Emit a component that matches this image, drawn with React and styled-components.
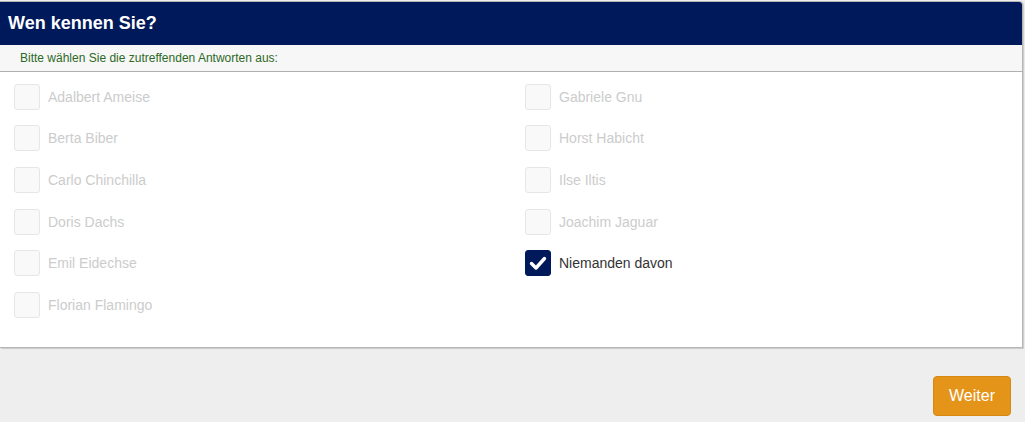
import React, { useState } from "react";
import styled, { createGlobalStyle } from "styled-components";

const GlobalStyle = createGlobalStyle`
  html, body {
    margin: 0;
    padding: 0;
    background: #eeeeee;
    font-family: "Liberation Sans", Arial, sans-serif;
  }
`;

const Panel = styled.div`
  margin: 1px 2px 0 0;
  background: #ffffff;
  border: 1px solid #b5b5b5;
  border-left: none;
  border-radius: 0 4px 0 0;
  box-shadow: 1px 1px 1px rgba(0, 0, 0, 0.15);
  overflow: hidden;
`;

const Header = styled.div`
  height: 43px;
  background: #00195a;
  color: #ffffff;
  font-size: 18px;
  font-weight: bold;
  display: flex;
  align-items: center;
  padding-left: 8px;
`;

const Hint = styled.div`
  height: 26px;
  background: #f7f7f7;
  border-bottom: 1px solid #b0b0b0;
  color: #2d6a26;
  font-size: 12px;
  display: flex;
  align-items: center;
  padding-left: 20px;
`;

const Options = styled.div`
  display: grid;
  grid-template-columns: 511px 1fr;
  grid-auto-flow: column;
  grid-template-rows: repeat(6, 41.6px);
  padding: 4px 0 21px 14px;
`;

const Option = styled.label`
  display: flex;
  align-items: center;
  gap: 8px;
  font-size: 14px;
  color: ${(p) => (p.$checked ? "#333333" : "#cccccc")};
  cursor: pointer;
`;

const Box = styled.span`
  width: 26px;
  height: 26px;
  box-sizing: border-box;
  border-radius: 3px;
  border: 1px solid ${(p) => (p.$checked ? "#00195a" : "#e6e6e6")};
  background: ${(p) => (p.$checked ? "#00195a" : "#f9f9f9")};
  display: flex;
  align-items: center;
  justify-content: center;
`;

const Footer = styled.div`
  display: flex;
  justify-content: flex-end;
  padding: 28px 14px 5px 0;
`;

const Button = styled.button`
  width: 78px;
  height: 40px;
  background: #e5941a;
  border: 1px solid #d58812;
  border-radius: 4px;
  color: #ffffff;
  font-family: "Liberation Sans", Arial, sans-serif;
  font-size: 16px;
`;

const left = [
  "Adalbert Ameise",
  "Berta Biber",
  "Carlo Chinchilla",
  "Doris Dachs",
  "Emil Eidechse",
  "Florian Flamingo",
];
const right = [
  "Gabriele Gnu",
  "Horst Habicht",
  "Ilse Iltis",
  "Joachim Jaguar",
  "Niemanden davon",
];

function Check() {
  return (
    <svg width="18" height="18" viewBox="0 0 18 18">
      <path
        d="M2.5 9.5 L7 14 L15.5 4.5"
        fill="none"
        stroke="#ffffff"
        strokeWidth="3.4"
        strokeLinecap="round"
        strokeLinejoin="round"
      />
    </svg>
  );
}

export default function App() {
  const [selected, setSelected] = useState(["Niemanden davon"]);

  const toggle = (name) =>
    setSelected((s) =>
      s.includes(name) ? s.filter((n) => n !== name) : [...s, name]
    );

  const renderOption = (name) => {
    const checked = selected.includes(name);
    return (
      <Option key={name} $checked={checked} onClick={() => toggle(name)}>
        <Box $checked={checked}>{checked && <Check />}</Box>
        {name}
      </Option>
    );
  };

  return (
    <>
      <GlobalStyle />
      <Panel>
        <Header>Wen kennen Sie?</Header>
        <Hint>Bitte wählen Sie die zutreffenden Antworten aus:</Hint>
        <Options>
          {left.map(renderOption)}
          {right.map(renderOption)}
        </Options>
      </Panel>
      <Footer>
        <Button>Weiter</Button>
      </Footer>
    </>
  );
}
